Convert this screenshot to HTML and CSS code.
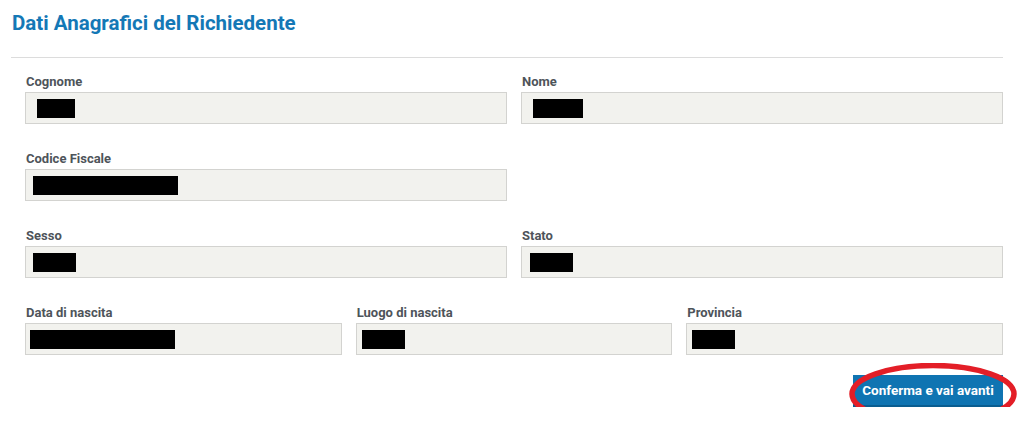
FILE: index.html
```html
<!DOCTYPE html>
<html>

<head>
<meta charset="utf-8">
<meta name="viewport" content="width=device-width, initial-scale=1">

<title>Dati Anagrafici del Richiedente</title>

<link rel="stylesheet" href="styles.css">
</head>

<body>

	<div id="page">
		<h1>Dati Anagrafici del Richiedente</h1>

		<form id="form">
			<div class="row two">
				<div class="field">
					<label>Cognome</label>
					<div class="box pad-12"><span class="redact w-short"></span></div>
				</div>
				<div class="field">
					<label>Nome</label>
					<div class="box pad-12"><span class="redact w-mid"></span></div>
				</div>
			</div>

			<div class="row two">
				<div class="field">
					<label>Codice Fiscale</label>
					<div class="box"><span class="redact w-long"></span></div>
				</div>
			</div>

			<div class="row two">
				<div class="field">
					<label>Sesso</label>
					<div class="box"><span class="redact w-tiny"></span></div>
				</div>
				<div class="field">
					<label>Stato</label>
					<div class="box pad-9"><span class="redact w-tiny"></span></div>
				</div>
			</div>

			<div class="row three">
				<div class="field">
					<label>Data di nascita</label>
					<div class="box pad-5"><span class="redact w-long"></span></div>
				</div>
				<div class="field">
					<label>Luogo di nascita</label>
					<div class="box pad-6"><span class="redact w-tiny"></span></div>
				</div>
				<div class="field">
					<label>Provincia</label>
					<div class="box pad-6"><span class="redact w-tiny"></span></div>
				</div>
			</div>

			<div class="actions">
				<div class="btn-wrap">
					<button type="button" class="btn">Conferma e vai avanti</button>
					<svg class="circle" width="170" height="64" viewBox="0 0 170 64">
						<ellipse cx="84" cy="31" rx="81" ry="28.5" fill="none" stroke="#e31e27" stroke-width="5.5"/>
					</svg>
				</div>
			</div>
		</form>
	</div>

</body>
</html>
```

FILE: styles.css
```css
	body {
		margin: 0;
		background: #fff;
		font-family: Roboto, "Noto Sans", sans-serif;
	}

	#page {
		box-sizing: border-box;
		width: 1003px;
		padding: 0 0 0 11px;
	}

	h1 {
		margin: 0;
		padding: 11px 0 0 1px;
		height: 58px;
		box-sizing: border-box;
		border-bottom: 1px solid #dcdcdc;
		font-size: 20.5px;
		font-weight: bold;
		color: #1478b6;
	}

	#form {
		padding: 14px 0 0 14px;
	}

	.row {
		display: grid;
		column-gap: 14px;
		margin-bottom: 25px;
	}

	.row.two {
		grid-template-columns: 1fr 1fr;
	}

	.row.three {
		grid-template-columns: 1fr 1fr 1fr;
		margin-bottom: 20px;
	}

	.field label {
		display: block;
		height: 20px;
		line-height: 19px;
		padding-left: 1px;
		font-size: 13px;
		font-weight: bold;
		color: #4e545a;
	}

	.box {
		box-sizing: border-box;
		height: 32px;
		padding: 6px 7px 0 7px;
		background: #f2f2ee;
		border: 1px solid #d3d3d0;
	}

	.pad-12 { padding-left: 11px; }
	.pad-9 { padding-left: 8px; }
	.pad-6 { padding-left: 5px; }
	.pad-5 { padding-left: 4px; }

	.redact {
		display: inline-block;
		height: 19px;
		background: #000;
	}

	.w-tiny { width: 43px; }
	.w-short { width: 38px; }
	.w-mid { width: 50px; }
	.w-long { width: 145px; }

	.actions {
		display: flex;
		justify-content: flex-end;
	}

	.btn-wrap {
		position: relative;
	}

	.btn {
		display: block;
		width: 150px;
		height: 32px;
		padding: 0;
		border: none;
		border-bottom: 2px solid #0a5d90;
		background: #0f74b2;
		color: #fff;
		font-family: Roboto, "Noto Sans", sans-serif;
		font-size: 13.5px;
		font-weight: bold;
	}

	.circle {
		position: absolute;
		left: -4px;
		top: -12px;
	}
```
